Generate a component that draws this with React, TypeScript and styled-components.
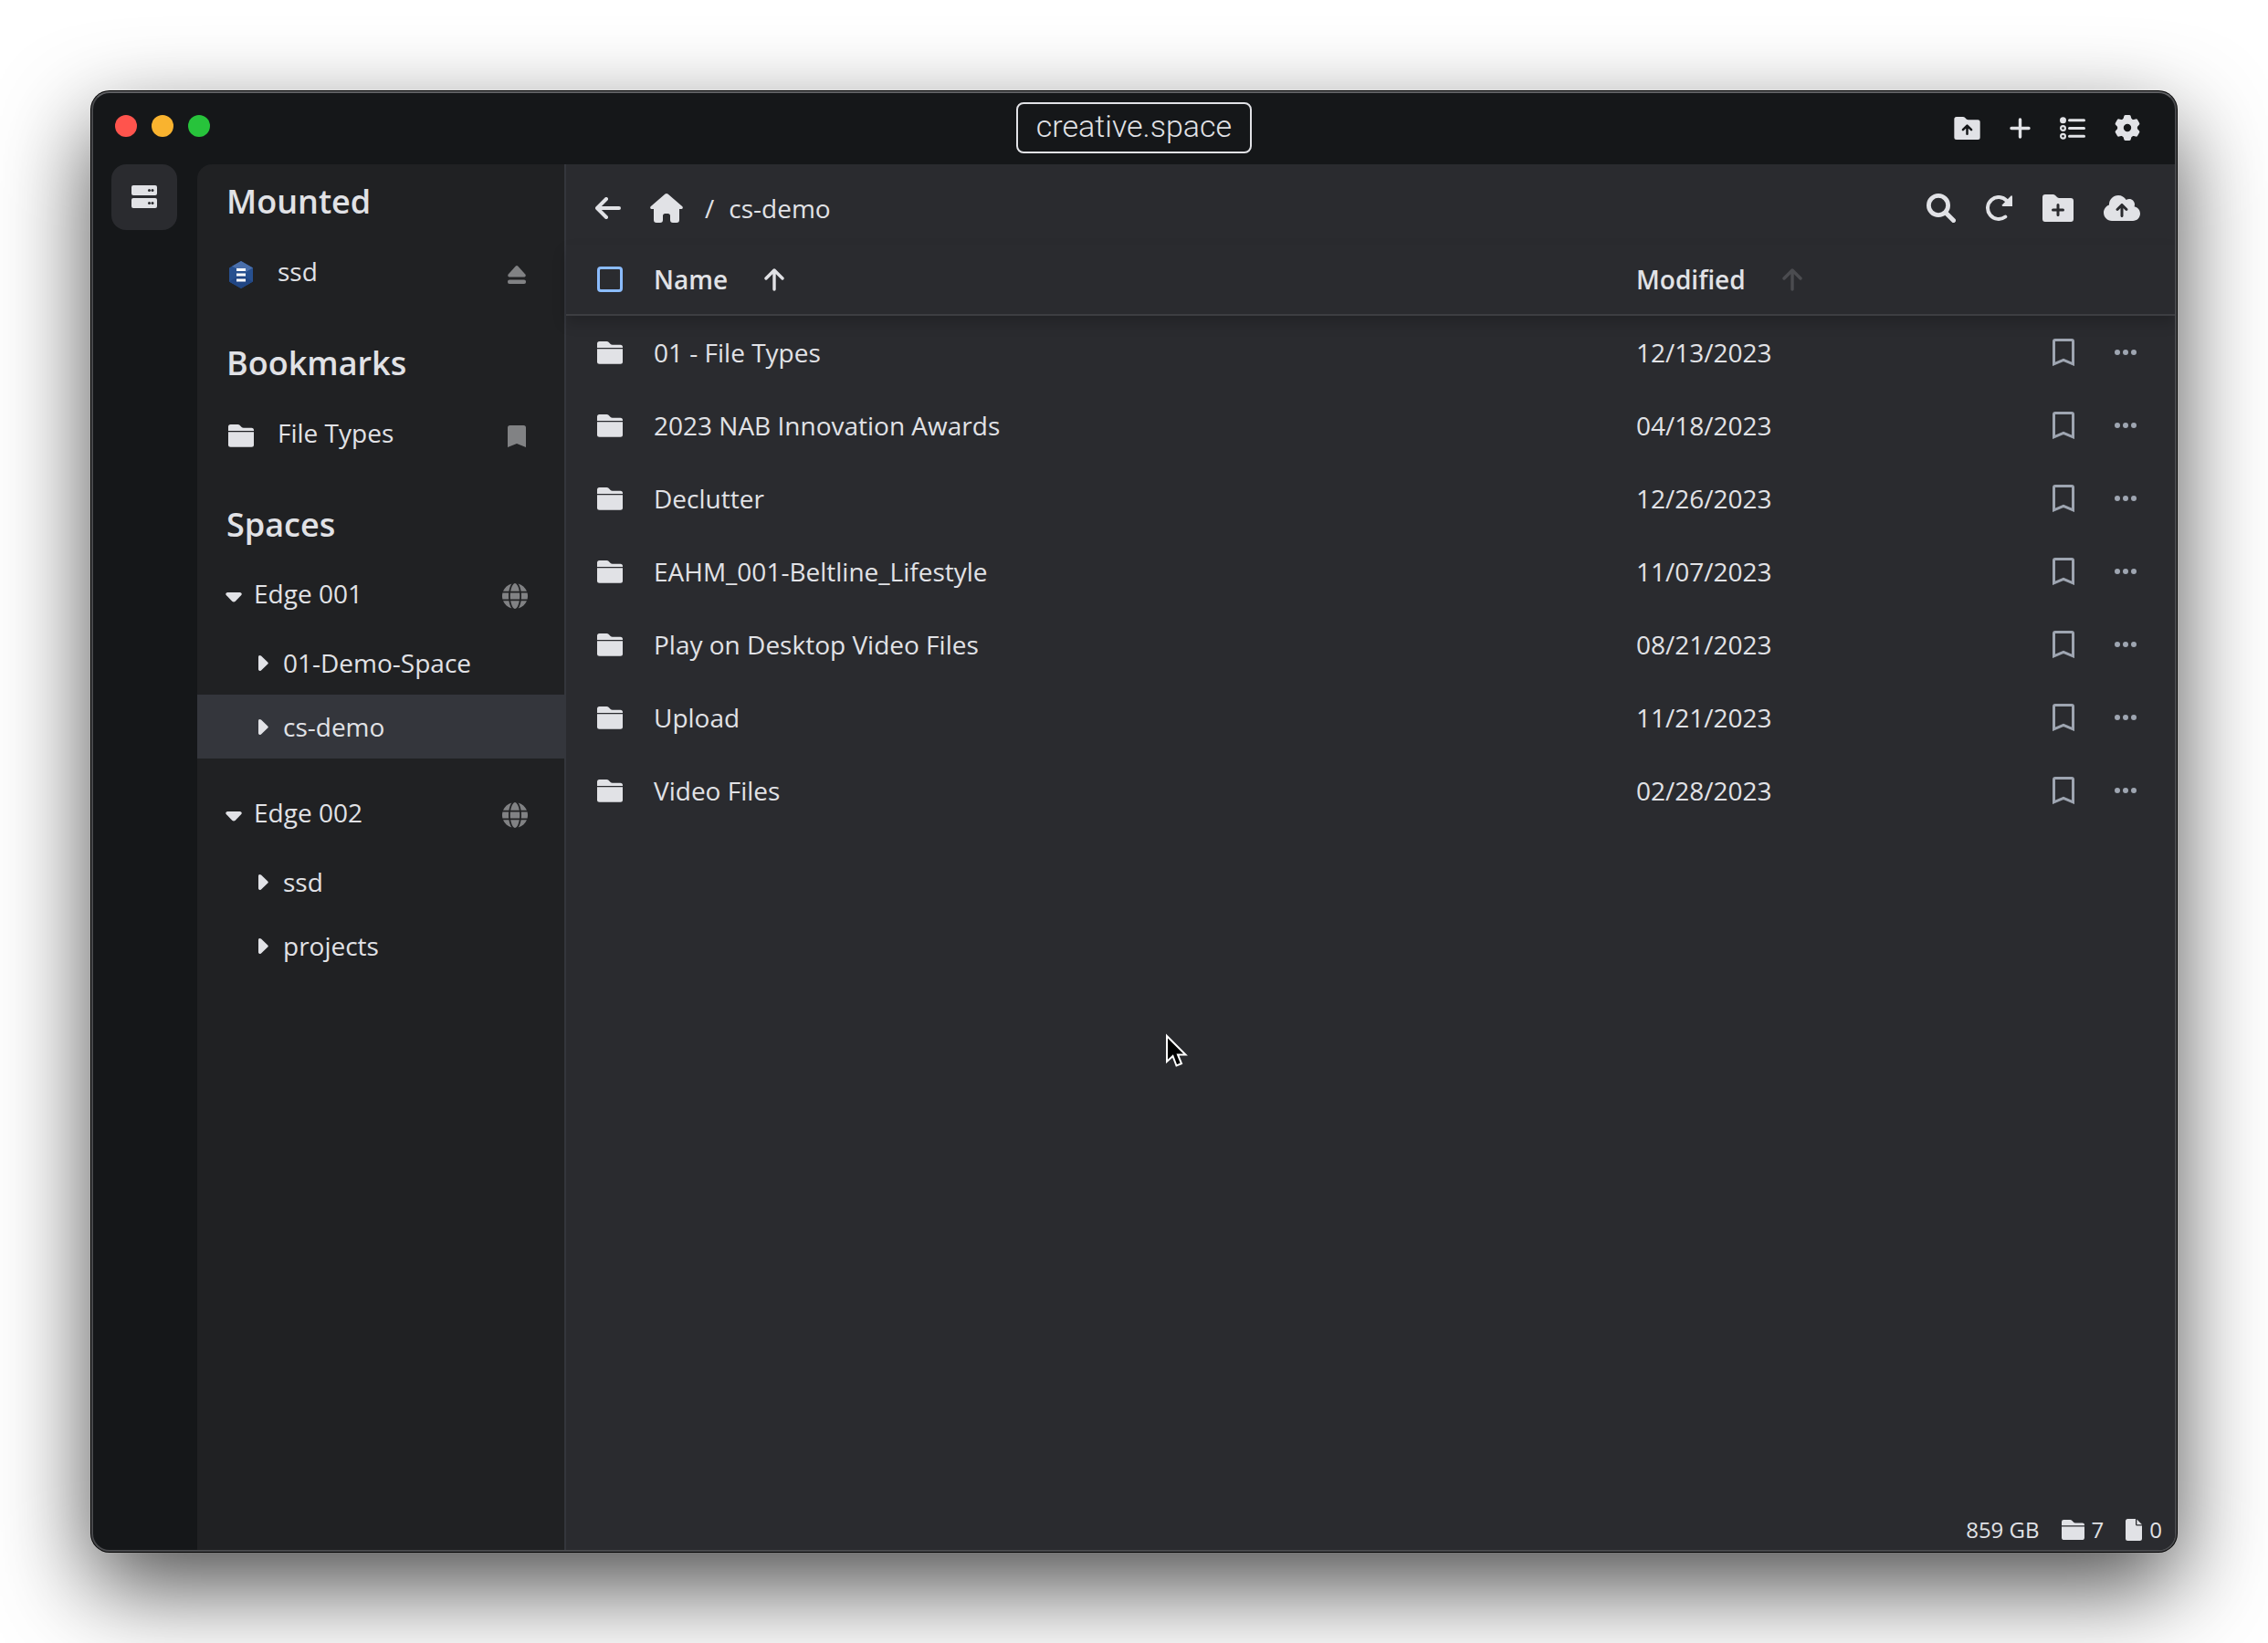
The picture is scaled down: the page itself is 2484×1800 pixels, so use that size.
import React from 'react';
import styled, { createGlobalStyle } from 'styled-components';
import { FaCloudArrowUp, FaGlobe } from 'react-icons/fa6';

const color = {
  chrome: '#151719',
  sidebar: '#202123',
  main: '#2a2b2f',
  raised: '#2a2b2f',
  selected: '#34363c',
  line: '#3d3e42',
  text: '#e1e2e6',
  muted: '#818284',
  action: '#9ea5b1',
  accent: '#8bbcff',
};

const GlobalStyle = createGlobalStyle`
  *, *::before, *::after { box-sizing: border-box; }
  body {
    margin: 0;
    background: #fff;
    color: ${color.text};
    font-family: "Open Sans", "Noto Sans", sans-serif;
    font-size: 28px;
    line-height: 40px;
  }
`;

const Desktop = styled.div`
  display: flex;
  min-height: 100vh;
  padding: 100px;
  overflow: hidden;
`;

const Window = styled.div`
  position: relative;
  display: flex;
  flex: 1;
  flex-direction: column;
  min-width: 0;
  overflow: hidden;
  border: 2px solid #48494c;
  border-top-color: #5f6063;
  border-radius: 20px;
  background: ${color.chrome};
  box-shadow: 0 0 0 1px #000, 0 38px 100px rgba(0, 0, 0, 0.7);
`;

const TitleBar = styled.header`
  display: grid;
  grid-template-columns: 1fr auto 1fr;
  align-items: center;
  height: 78px;
  padding: 0 38px 2px;
`;

const Lights = styled.div`
  display: flex;
  gap: 16px;
  margin-left: -14px;
  padding-bottom: 4px;
`;

const Light = styled.button<{ $tone: string }>`
  width: 24px;
  height: 24px;
  padding: 0;
  border: 0;
  border-radius: 50%;
  background: ${({ $tone }) => $tone};
`;

const Brand = styled.div`
  padding: 4px 20px 8px;
  border: 2px solid ${color.text};
  border-radius: 8px;
  font-family: Roboto, "Open Sans", sans-serif;
  font-size: 34px;
  font-weight: 300;
`;

const Actions = styled.div<{ $gap: number }>`
  display: flex;
  align-items: center;
  justify-content: flex-end;
  gap: ${({ $gap }) => $gap}px;
`;

const IconButton = styled.button<{ $tone?: string }>`
  display: flex;
  align-items: center;
  justify-content: center;
  padding: 0;
  border: 0;
  background: none;
  color: ${({ $tone }) => $tone || color.text};
  svg { display: block; }
`;

const Body = styled.div`
  display: flex;
  flex: 1;
  min-height: 0;
`;

const Rail = styled.nav`
  flex: none;
  width: 114px;
  padding: 0 20px;
`;

const RailButton = styled(IconButton)`
  width: 72px;
  height: 72px;
  padding-bottom: 2px;
  border-radius: 16px;
  background: ${color.raised};
`;

const Sidebar = styled.aside`
  flex: none;
  width: 404px;
  border-right: 2px solid ${color.selected};
  border-top-left-radius: 16px;
  background: ${color.sidebar};
`;

const Section = styled.section`
  padding-bottom: 20px;
`;

const Heading = styled.h2`
  margin: 0;
  padding: 2px 32px 0;
  font-size: 36px;
  font-weight: 600;
  line-height: 78px;
`;

const SideItem = styled.div`
  display: flex;
  align-items: center;
  gap: 26px;
  height: 77px;
  padding: 4px 42px 0 34px;
`;

const SideLabel = styled.span`
  flex: 1;
  padding-bottom: 8px;
`;

const Group = styled.div`
  padding-bottom: 23px;
`;

const EdgeRow = styled.div`
  display: flex;
  align-items: center;
  height: 77px;
  padding: 0 40px 0 31px;
`;

const EdgeToggle = styled.button`
  display: flex;
  flex: 1;
  align-items: center;
  gap: 13px;
  padding: 0 0 6px;
  border: 0;
  background: none;
  color: inherit;
  font: inherit;
  text-align: left;
`;

const SpaceLink = styled.a<{ $selected?: boolean }>`
  display: flex;
  align-items: center;
  gap: 16px;
  height: 70px;
  padding-left: 67px;
  background: ${({ $selected }) => ($selected ? color.selected : 'transparent')};
  color: inherit;
  text-decoration: none;
`;

const Main = styled.main`
  display: flex;
  flex: 1;
  flex-direction: column;
  min-width: 0;
  background: ${color.main};
`;

const Toolbar = styled.div`
  display: flex;
  align-items: center;
  justify-content: space-between;
  height: 88px;
  padding: 8px 38px 0 32px;
`;

const Crumbs = styled.nav`
  display: flex;
  align-items: center;
`;

const HomeLink = styled.a`
  margin: 0 24px 0 32px;
  color: inherit;
  svg { display: block; }
`;

const Crumb = styled.a`
  margin-left: 16px;
  color: inherit;
  text-decoration: none;
`;

const Files = styled.div`
  flex: 1;
`;

const Table = styled.table`
  width: 100%;
  border-collapse: separate;
  border-spacing: 0;
  table-layout: fixed;
  text-align: left;
`;

const HeadRow = styled.tr`
  box-shadow: 0 8px 14px rgba(0, 0, 0, 0.18);
`;

const Th = styled.th<{ $width?: number }>`
  width: ${({ $width }) => ($width ? `${$width}px` : 'auto')};
  height: 78px;
  padding: 0;
  border-bottom: 2px solid ${color.line};
  font-weight: 600;
`;

const Td = styled.td`
  height: 80px;
  padding: 0;
`;

const CheckBox = styled.input`
  display: block;
  width: 28px;
  height: 28px;
  margin: 0 0 0 34px;
  appearance: none;
  border: 3px solid ${color.accent};
  border-radius: 4px;
`;

const SortButton = styled.button`
  display: flex;
  align-items: center;
  gap: 40px;
  padding: 0;
  border: 0;
  background: none;
  color: inherit;
  font: inherit;
`;

const FileIcon = styled.div`
  padding-left: 34px;
  svg { display: block; }
`;

const RowActions = styled.div`
  display: flex;
  align-items: center;
  justify-content: flex-end;
  gap: 44px;
  padding-right: 42px;
`;

const StatusBar = styled.footer`
  display: flex;
  align-items: center;
  justify-content: flex-end;
  gap: 24px;
  height: 44px;
  padding-right: 14px;
  font-size: 24px;
`;

const Stat = styled.span`
  display: flex;
  align-items: center;
  gap: 8px;
`;

const Pointer = styled.svg`
  position: absolute;
  top: 1030px;
  left: 1174px;
`;

const FolderIcon = ({ size = 28 }: { size?: number }) => (
  <svg width={size} height={(size * 25) / 28} viewBox="0 0 28 25" fill="currentColor">
    <path d="M0 7V2.5A2.5 2.5 0 0 1 2.5 0H10.500q1.200 0 2 .8L14.700 3q.8.800 2 .8H25.500A2.500 2.500 0 0 1 28 6.300V7z" />
    <path d="M0 8.300H28V22.200A2.500 2.500 0 0 1 25.500 24.700H2.500A2.500 2.500 0 0 1 0 22.200z" />
  </svg>
);

const TabFolder = ({ width, height, hole, cut }: { width: number; height: number; hole: string; cut: string }) => (
  <svg width={width} height={height} viewBox="0 0 34 30" fill="none">
    <path
      fill="currentColor"
      d="M0 3A3 3 0 0 1 3 0H11.500Q13 0 14 1L16 3Q17 4 18.500 4H31A3 3 0 0 1 34 7V27A3 3 0 0 1 31 30H3A3 3 0 0 1 0 27z"
    />
    <path d={cut} stroke={hole} strokeWidth="3" strokeLinecap="round" strokeLinejoin="round" />
  </svg>
);

const ListIcon = () => (
  <svg width="28" height="25" viewBox="0 0 28 25" fill="none" stroke="currentColor">
    <circle cx="3.500" cy="3.700" r="3.500" fill="currentColor" stroke="none" />
    <circle cx="3.500" cy="12.500" r="2.400" strokeWidth="2.200" />
    <circle cx="3.500" cy="21.300" r="2.400" strokeWidth="2.200" />
    <path d="M10.500 3.700H26.500M10.500 12.500H26.500M10.500 21.300H26.500" strokeWidth="3" strokeLinecap="round" />
  </svg>
);

const GearIcon = () => (
  <svg width="28" height="28" viewBox="-14 -14 28 28" fill="currentColor">
    <circle r="7.500" fill="none" stroke="currentColor" strokeWidth="6.600" />
    {[0, 60, 120, 180, 240, 300].map((angle) => (
      <path
        key={angle}
        transform={`rotate(${angle})`}
        d="M-5.500 -8.500Q-4.300 -9.800 -4 -11.500L-3.700 -12.700Q-3.400 -14 -2 -14H2Q3.400 -14 3.700 -12.700L4 -11.500Q4.300 -9.800 5.500 -8.500z"
      />
    ))}
  </svg>
);

const PlusIcon = () => (
  <svg width="23" height="23" viewBox="0 0 23 23" stroke="currentColor" strokeWidth="3.400" strokeLinecap="round">
    <path d="M11.500 2V21M2 11.500H21" />
  </svg>
);

const ServerIcon = () => (
  <svg width="28" height="25" viewBox="0 0 28 25" fill="currentColor">
    <rect width="28" height="11" rx="2" />
    <rect y="14" width="28" height="11" rx="2" />
    <g fill={color.raised}>
      <circle cx="19.500" cy="5.500" r="1.500" />
      <circle cx="23" cy="5.500" r="1.500" />
      <circle cx="19.500" cy="19.500" r="1.500" />
      <circle cx="23" cy="19.500" r="1.500" />
    </g>
  </svg>
);

const SpaceLogo = () => (
  <svg width="28" height="30" viewBox="0 0 28 30">
    <path d="M14 0L27 7.500V22.500L14 30L1 22.500V7.500z" fill="#27508f" />
    <path d="M14 0L27 7.500L19 12V8H9L4 5.800z" fill="#4a6fab" />
    <path d="M1 22.500L14 15L27 22.500L14 30z" fill="#214684" />
    <path d="M9 8H19V11H9zM9 13.500H19V16.500H9zM9 19.500H19V22.500H9z" fill="#fff" />
  </svg>
);

const EjectIcon = () => (
  <svg width="20" height="20" viewBox="0 0 20 20" fill="currentColor">
    <path d="M8.600.7Q10-.7 11.400.7L19.300 9.500Q20.600 12 18.500 12.400H1.500Q-.6 12 .7 9.500z" />
    <rect y="15.600" width="20" height="4.400" rx="2" />
  </svg>
);

const SolidBookmark = () => (
  <svg width="20" height="24" viewBox="0 0 20 24" fill="currentColor">
    <path d="M0 2.500A2.500 2.500 0 0 1 2.500 0H17.500A2.500 2.500 0 0 1 20 2.500V24L10 20L0 24z" />
  </svg>
);

const OutlineBookmark = () => (
  <svg width="24" height="30" viewBox="0 0 24 30" fill="none" stroke="currentColor" strokeWidth="3">
    <path d="M1.500 27.800V3Q1.500 1.500 3 1.500H21Q22.500 1.500 22.500 3V27.800L12 23.300z" />
  </svg>
);

const DotsIcon = () => (
  <svg width="24" height="6" viewBox="0 0 24 6" fill="currentColor">
    <circle cx="3" cy="3" r="3" />
    <circle cx="12" cy="3" r="3" />
    <circle cx="21" cy="3" r="3" />
  </svg>
);

const CaretDown = () => (
  <svg width="18" height="20" viewBox="0 -9 18 20" fill="currentColor">
    <path d="M2 0H16Q19 1 17 3.200L10.800 9.800Q9 11.400 7.200 9.800L1 3.200Q-1 1 2 0z" />
  </svg>
);

const CaretRight = () => (
  <svg width="11" height="17" viewBox="0 0 11 17" fill="currentColor">
    <path d="M0 1.500Q.5-.8 3 .6L10 7.200Q11.600 8.500 10 9.800L3 16.400Q.5 17.800 0 15.500z" />
  </svg>
);

const ArrowLeft = () => (
  <svg width="28" height="24" viewBox="0 0 28 24" fill="none" stroke="currentColor" strokeWidth="4" strokeLinecap="round" strokeLinejoin="round">
    <path d="M26 12H3M12 2L2 12L12 22" />
  </svg>
);

const ArrowUp = ({ tone }: { tone: string }) => (
  <svg width="22" height="25" viewBox="0 0 22 25" fill="none" stroke={tone} strokeWidth="3.400" strokeLinecap="round" strokeLinejoin="round">
    <path d="M11 23V2M2 11L11 2L20 11" />
  </svg>
);

const HomeIcon = () => (
  <svg width="36" height="32" viewBox="0 0 36 32" fill="currentColor">
    <path d="M16.500.6Q18-.6 19.500.6L35.400 14.200Q36.600 16.800 34.500 17H32V29Q32 32 29 32H25Q22 32 22 29V24.500Q22 22 19.500 22H16.500Q14 22 14 24.500V29Q14 32 11 32H7Q4 32 4 29V17H1.500Q-.6 16.800.6 14.200z" />
  </svg>
);

const SearchIcon = () => (
  <svg width="32" height="32" viewBox="0 0 32 32" fill="none" stroke="currentColor" strokeWidth="5" strokeLinecap="round">
    <circle cx="13" cy="13" r="10.600" strokeWidth="4.800" />
    <path d="M21.500 21.500L29.500 29.500" />
  </svg>
);

const RefreshIcon = () => (
  <svg width="29" height="28" viewBox="0 0 29 28" fill="none">
    <path d="M22.800 5.800A12 12 0 1 0 21.300 23.500" stroke="currentColor" strokeWidth="4" strokeLinecap="round" />
    <path d="M27.500 .4Q29 0 29 1.500V12H18.500Q17 11.500 18 10.300z" fill="currentColor" />
  </svg>
);

const files = [
  ['01 - File Types', '12/13/2023'],
  ['2023 NAB Innovation Awards', '04/18/2023'],
  ['Declutter', '12/26/2023'],
  ['EAHM_001-Beltline_Lifestyle', '11/07/2023'],
  ['Play on Desktop Video Files', '08/21/2023'],
  ['Upload', '11/21/2023'],
  ['Video Files', '02/28/2023'],
];

const edges = [
  { name: 'Edge 001', spaces: ['01-Demo-Space', 'cs-demo'] },
  { name: 'Edge 002', spaces: ['ssd', 'projects'] },
];

export default function App() {
  return (
    <>
      <GlobalStyle />
      <Desktop>
        <Window>
          <TitleBar>
            <Lights>
              <Light $tone="#ff544d" aria-label="Close" />
              <Light $tone="#f9b32f" aria-label="Minimize" />
              <Light $tone="#27c33b" aria-label="Zoom" />
            </Lights>
            <Brand>creative.space</Brand>
            <Actions $gap={32}>
              <IconButton aria-label="Upload folder">
                <TabFolder width={29} height={25} hole={color.chrome} cut="M17 22.500V12M11.500 17L17 11.500L22.500 17" />
              </IconButton>
              <IconButton aria-label="Add"><PlusIcon /></IconButton>
              <IconButton aria-label="Tasks"><ListIcon /></IconButton>
              <IconButton aria-label="Settings"><GearIcon /></IconButton>
            </Actions>
          </TitleBar>
          <Body>
            <Rail>
              <RailButton aria-label="Storage"><ServerIcon /></RailButton>
            </Rail>
            <Sidebar>
              <Section>
                <Heading>Mounted</Heading>
                <SideItem>
                  <SpaceLogo />
                  <SideLabel>ssd</SideLabel>
                  <IconButton $tone={color.muted} aria-label="Eject"><EjectIcon /></IconButton>
                </SideItem>
              </Section>
              <Section>
                <Heading>Bookmarks</Heading>
                <SideItem>
                  <FolderIcon />
                  <SideLabel>File Types</SideLabel>
                  <IconButton $tone={color.muted} aria-label="Remove bookmark"><SolidBookmark /></IconButton>
                </SideItem>
              </Section>
              <Section>
                <Heading>Spaces</Heading>
                {edges.map((edge) => (
                  <Group key={edge.name}>
                    <EdgeRow>
                      <EdgeToggle>
                        <CaretDown />
                        {edge.name}
                      </EdgeToggle>
                      <IconButton $tone={color.muted} aria-label="Open in browser"><FaGlobe size={28} /></IconButton>
                    </EdgeRow>
                    {edge.spaces.map((space) => (
                      <SpaceLink key={space} href="#" $selected={space === 'cs-demo'}>
                        <CaretRight />
                        {space}
                      </SpaceLink>
                    ))}
                  </Group>
                ))}
              </Section>
            </Sidebar>
            <Main>
              <Toolbar>
                <Crumbs>
                  <IconButton aria-label="Back"><ArrowLeft /></IconButton>
                  <HomeLink href="#" aria-label="Home"><HomeIcon /></HomeLink>
                  <span>/</span>
                  <Crumb href="#">cs-demo</Crumb>
                </Crumbs>
                <Actions $gap={33}>
                  <IconButton aria-label="Search"><SearchIcon /></IconButton>
                  <IconButton aria-label="Refresh"><RefreshIcon /></IconButton>
                  <IconButton aria-label="New folder">
                    <TabFolder width={34} height={30} hole={color.main} cut="M17 11.500V22.500M11.500 17H22.500" />
                  </IconButton>
                  <IconButton aria-label="Upload"><FaCloudArrowUp size={40} /></IconButton>
                </Actions>
              </Toolbar>
              <Files>
                <Table>
                  <thead>
                    <HeadRow>
                      <Th $width={96}><CheckBox type="checkbox" aria-label="Select all" /></Th>
                      <Th><SortButton>Name <ArrowUp tone={color.text} /></SortButton></Th>
                      <Th $width={430}><SortButton>Modified <ArrowUp tone="#4b4c50" /></SortButton></Th>
                      <Th $width={160} />
                    </HeadRow>
                  </thead>
                  <tbody>
                    {files.map(([name, modified]) => (
                      <tr key={name}>
                        <Td><FileIcon><FolderIcon /></FileIcon></Td>
                        <Td>{name}</Td>
                        <Td>{modified}</Td>
                        <Td>
                          <RowActions>
                            <IconButton $tone={color.action} aria-label="Bookmark"><OutlineBookmark /></IconButton>
                            <IconButton $tone={color.action} aria-label="More"><DotsIcon /></IconButton>
                          </RowActions>
                        </Td>
                      </tr>
                    ))}
                  </tbody>
                </Table>
              </Files>
              <StatusBar>
                <span>859 GB</span>
                <Stat><FolderIcon size={25} />7</Stat>
                <Stat>
                  <svg width="18" height="24" viewBox="0 0 18 24" fill="currentColor">
                    <path d="M2.500 0H11V6Q11 7.500 12.500 7.500H18V21.500A2.500 2.500 0 0 1 15.500 24H2.500A2.500 2.500 0 0 1 0 21.500V2.500A2.500 2.500 0 0 1 2.500 0z" />
                    <path d="M12.300 0.500L18 6.300H12.300z" />
                  </svg>
                  0
                </Stat>
              </StatusBar>
            </Main>
          </Body>
          <Pointer width="26" height="38" viewBox="0 0 26 38">
            <path d="M2 3V31L8.500 25L12.500 35.500L18 33.300L14 23.500H22.500z" fill="#000" stroke="#fff" strokeWidth="2" />
          </Pointer>
        </Window>
      </Desktop>
    </>
  );
}
